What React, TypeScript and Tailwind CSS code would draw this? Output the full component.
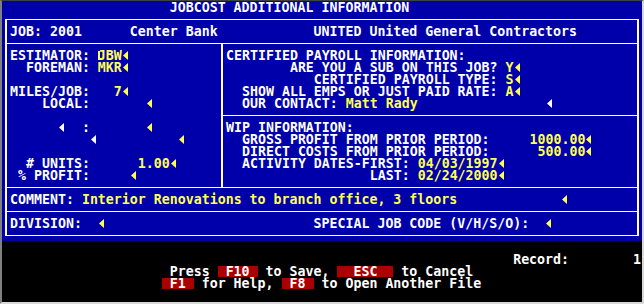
import React from "react";

const YEL = "text-[#ffff55]";

const Arrow = ({ white = false }: { white?: boolean }) => (
  <span className="inline-block w-[8px] h-[12px] align-top">
    <svg className="block" width="8" height="12" viewBox="0 0 8 12">
      <polygon points="1,6.5 6,2 6,11" fill={white ? "#ffffff" : "#ffff55"} />
    </svg>
  </span>
);

const Row = ({ children }: { children?: React.ReactNode }) => (
  <div className="h-[12px] leading-[13px] whitespace-pre">{children}</div>
);

const V = ({ children }: { children: React.ReactNode }) => (
  <span className={YEL}>{children}</span>
);

const Key = ({ children }: { children: React.ReactNode }) => (
  <span className="inline-block h-[11px] mt-[1px] align-top leading-[11px] bg-[#aa0000] text-white">
    {children}
  </span>
);

const App = () => {
  return (
    <div className="w-[644px] h-[304px] bg-black border-t border-t-[#404040] border-l-2 border-l-[#808080] border-r-2 border-r-[#d8d8d8] border-b-2 border-b-[#d8d8d8] font-['DejaVu_Sans_Mono',monospace] font-bold text-[13.287px] text-white overflow-hidden">
      <div className="h-[240px] bg-[#0000aa]">
        <Row>{"                     JOBCOST ADDITIONAL INFORMATION"}</Row>

        <div className="mt-[6px] mx-[3px] border-x-2 border-y border-white">
          {/* job line */}
          <div className="px-[3px] pt-[5px] pb-[6px] border-b border-white">
            <Row>{"JOB: 2001      Center Bank            UNITED United General Contractors"}</Row>
          </div>

          <div className="flex border-b border-white">
            {/* left column */}
            <div className="w-[216px] px-[3px] pt-[5px] pb-[6px] border-r-2 border-white">
              <Row>
                {"ESTIMATOR: "}
                <span className="relative">
                  <V>J</V>
                  <span className="absolute left-0 top-[3px] w-[2px] h-[9px] bg-[#ffff55]" />
                </span>
                <V>BW</V>
                <Arrow />
              </Row>
              <Row>
                {"  FOREMAN: "}
                <V>MKR</V>
                <Arrow />
              </Row>
              <Row />
              <Row>
                {"MILES/JOB:   "}
                <V>7</V>
                <Arrow />
              </Row>
              <Row>
                {"    LOCAL:       "}
                <Arrow />
              </Row>
              <Row />
              <Row>
                {"      "}
                <Arrow white />
                {"  :       "}
                <Arrow />
              </Row>
              <Row>
                {"          "}
                <Arrow white />
                {"          "}
                <Arrow />
              </Row>
              <Row />
              <Row>
                {"  # UNITS:      "}
                <V>1.00</V>
                <Arrow />
              </Row>
              <Row>
                {" % PROFIT:     "}
                <Arrow />
              </Row>
            </div>

            {/* right column */}
            <div className="flex-1 flex flex-col">
              <div className="pl-[3px] pt-[5px] pb-[6px] border-b border-white">
                <Row>{"CERTIFIED PAYROLL INFORMATION:"}</Row>
                <Row>
                  {"        ARE YOU A SUB ON THIS JOB? "}
                  <V>Y</V>
                  <Arrow />
                </Row>
                <Row>
                  {"           CERTIFIED PAYROLL TYPE: "}
                  <V>S</V>
                  <Arrow />
                </Row>
                <Row>
                  {"  SHOW ALL EMPS OR JUST PAID RATE: "}
                  <V>A</V>
                  <Arrow />
                </Row>
                <Row>
                  {"  OUR CONTACT: "}
                  <V>Matt Rady</V>
                  {"                "}
                  <Arrow white />
                </Row>
              </div>
              <div className="pl-[3px] pt-[5px] pb-[6px]">
                <Row>{"WIP INFORMATION:"}</Row>
                <Row>
                  {"  GROSS PROFIT FROM PRIOR PERIOD:     "}
                  <V>1000.00</V>
                  <Arrow />
                </Row>
                <Row>
                  {"  DIRECT COSTS FROM PRIOR PERIOD:      "}
                  <V>500.00</V>
                  <Arrow />
                </Row>
                <Row>
                  {"  ACTIVITY DATES-FIRST: "}
                  <V>04/03/1997</V>
                  <Arrow />
                </Row>
                <Row>
                  {"                  LAST: "}
                  <V>02/24/2000</V>
                  <Arrow />
                </Row>
              </div>
            </div>
          </div>

          <div className="px-[3px] pt-[5px] pb-[6px] border-b border-white">
            <Row>
              {"COMMENT: "}
              <V>Interior Renovations to branch office, 3 floors</V>
              {"             "}
              <Arrow />
            </Row>
          </div>

          <div className="px-[3px] pt-[5px] pb-[6px]">
            <Row>
              {"DIVISION:  "}
              <Arrow />
              {"                          SPECIAL JOB CODE (V/H/S/O):  "}
              <Arrow />
            </Row>
          </div>
        </div>
      </div>

      <div className="h-[61px]">
        <Row />
        <Row>{"                                                                Record:        1"}</Row>
        <Row>
          {"                     Press "}
          <Key>{" F10 "}</Key>
          {" to Save, "}
          <Key>{"  ESC  "}</Key>
          {" to Cancel"}
        </Row>
        <Row>
          {"                    "}
          <Key>{" F1 "}</Key>
          {" for Help, "}
          <Key>{" F8 "}</Key>
          {" to Open Another File"}
        </Row>
      </div>
    </div>
  );
};

export default App;
